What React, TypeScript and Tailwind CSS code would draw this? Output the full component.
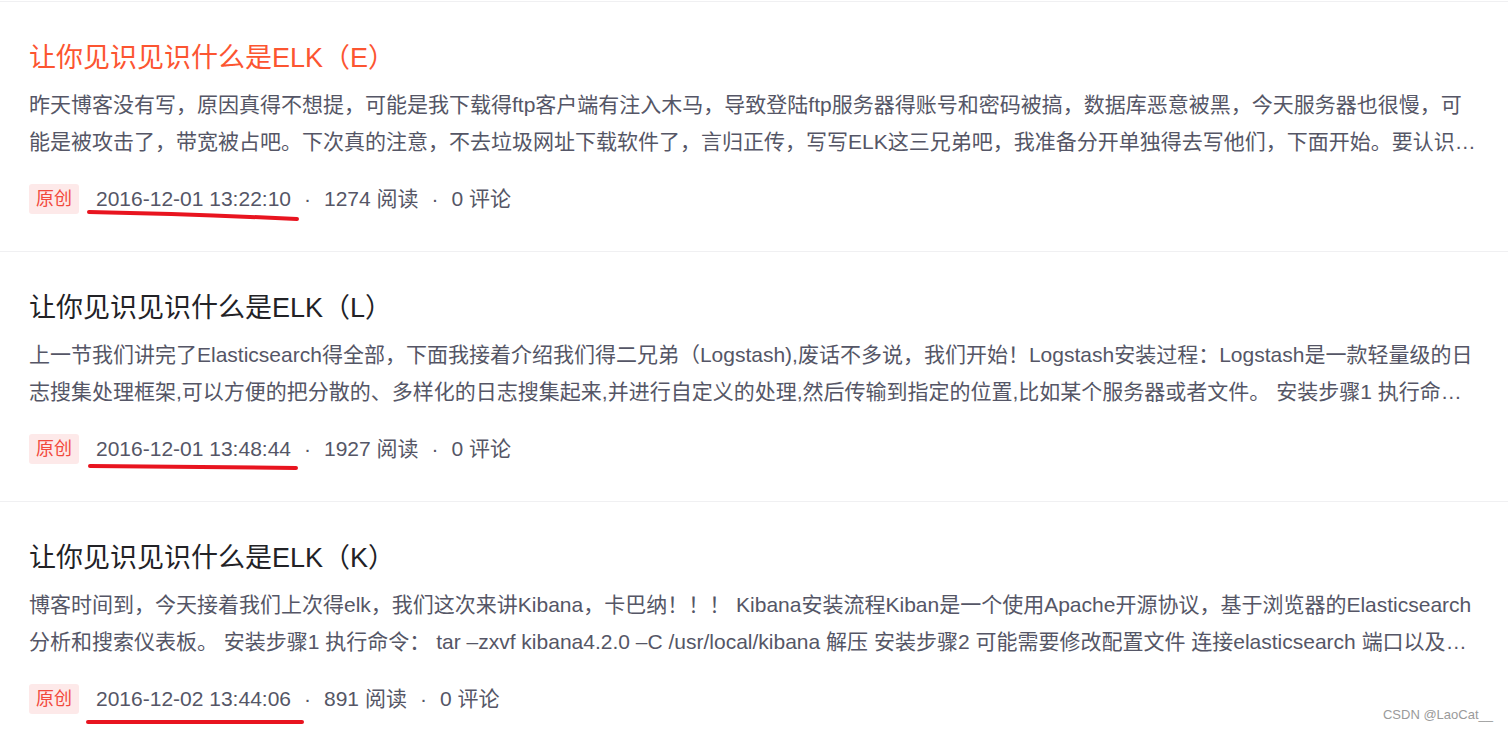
import React from "react";

type Post = {
  title: string;
  summary: string;
  date: string;
  reads: number;
  comments: number;
  active?: boolean;
  mark: string;
};

const posts: Post[] = [
  {
    title: "让你见识见识什么是ELK（E）",
    summary:
      "昨天博客没有写，原因真得不想提，可能是我下载得ftp客户端有注入木马，导致登陆ftp服务器得账号和密码被搞，数据库恶意被黑，今天服务器也很慢，可能是被攻击了，带宽被占吧。下次真的注意，不去垃圾网址下载软件了，言归正传，写写ELK这三兄弟吧，我准备分开单独得去写他们，下面开始。要认识ELK，首先要认识E",
    date: "2016-12-01 13:22:10",
    reads: 1274,
    comments: 0,
    active: true,
    mark: "M 60 28 Q 160 30 268 35",
  },
  {
    title: "让你见识见识什么是ELK（L）",
    summary:
      "上一节我们讲完了Elasticsearch得全部，下面我接着介绍我们得二兄弟（Logstash),废话不多说，我们开始！Logstash安装过程：Logstash是一款轻量级的日志搜集处理框架,可以方便的把分散的、多样化的日志搜集起来,并进行自定义的处理,然后传输到指定的位置,比如某个服务器或者文件。 安装步骤1 执行命令： tar –zxvf logstash-2.0.0.tar.gz –C /usr/local/logstash 解压",
    date: "2016-12-01 13:48:44",
    reads: 1927,
    comments: 0,
    mark: "M 61 32 Q 160 33 267 34",
  },
  {
    title: "让你见识见识什么是ELK（K）",
    summary:
      "博客时间到，今天接着我们上次得elk，我们这次来讲Kibana，卡巴纳！！！ Kibana安装流程Kiban是一个使用Apache开源协议，基于浏览器的Elasticsearch分析和搜索仪表板。 安装步骤1 执行命令： tar –zxvf kibana4.2.0 –C /usr/local/kibana 解压 安装步骤2 可能需要修改配置文件 连接elasticsearch 端口以及地址",
    date: "2016-12-02 13:44:06",
    reads: 891,
    comments: 0,
    mark: "M 59 38 Q 165 38 273 38",
  },
];

const PostItem = ({ post }: { post: Post }) => {
  return (
    <div className="border-t border-[#f0f0f2] pl-[29px] pr-[29px] pt-[38px] pb-[37px]">
      <h4
        className={
          "text-[27px] leading-[36px] font-normal whitespace-nowrap " +
          (post.active ? "text-[#fc5531]" : "text-[#222226]")
        }
      >
        {post.title}
      </h4>
      <p className="mt-[10px] text-[21px] leading-[37px] text-[#555666] line-clamp-2">
        {post.summary}
      </p>
      <div className="relative mt-[24px] flex h-[30px] items-center text-[21px] text-[#555666] whitespace-nowrap">
        <span className="flex h-[30px] items-center rounded-[3px] bg-[#fde9e9] px-[7px] text-[18px] text-[#f24a3d]">
          原创
        </span>
        <span className="ml-[17px]">{post.date}</span>
        <span className="mx-[13px]">·</span>
        <span>{post.reads} 阅读</span>
        <span className="mx-[13px]">·</span>
        <span>{post.comments} 评论</span>
        <svg
          className="pointer-events-none absolute left-0 top-0 overflow-visible"
          width="320"
          height="50"
          viewBox="0 0 320 50"
        >
          <path
            d={post.mark}
            fill="none"
            stroke="#e8141f"
            strokeWidth="4"
            strokeLinecap="round"
          />
        </svg>
      </div>
    </div>
  );
};

const App = () => {
  return (
    <div
      className="relative h-[731px] overflow-hidden bg-white pt-px"
      style={{ fontFamily: '"Liberation Sans", "Noto Sans CJK SC", sans-serif' }}
    >
      {posts.map((post) => (
        <PostItem key={post.date} post={post} />
      ))}
      <div className="absolute bottom-[7px] right-[15px] text-[13px] text-[#9a9a9a]">
        CSDN @LaoCat__
      </div>
    </div>
  );
};

export default App;
